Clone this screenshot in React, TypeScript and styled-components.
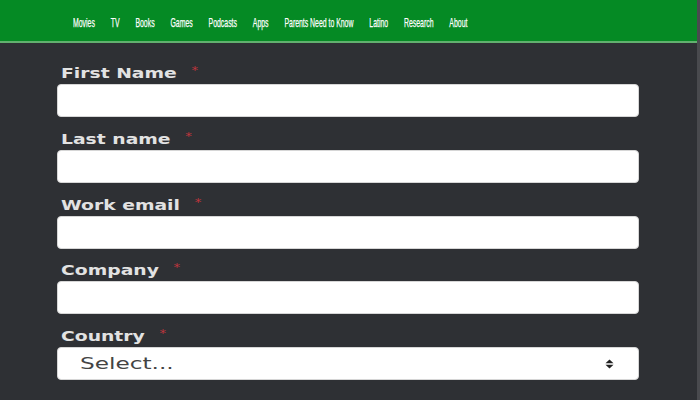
import React from "react";
import styled, { createGlobalStyle } from "styled-components";

const GlobalStyle = createGlobalStyle`
  html, body { margin: 0; padding: 0; }
  body { background: #2e3034; font-family: "DejaVu Sans", sans-serif; overflow: hidden; }
`;

const Page = styled.div`
  width: 700px;
  height: 400px;
  box-sizing: border-box;
  border-right: 3px solid rgba(255, 255, 255, 0.13);
  display: flex;
  flex-direction: column;
  overflow: hidden;
`;

const Header = styled.header`
  height: 41px;
  flex-shrink: 0;
  background: #058a24;
  border-bottom: 2px solid #62b06f;
  display: flex;
  align-items: center;
  padding-left: 73px;
`;

const Nav = styled.nav`
  display: flex;
  gap: 30px;
  transform: scaleX(0.53);
  transform-origin: left center;
  white-space: nowrap;
  margin-top: 3px;
`;

const NavLink = styled.a`
  color: #ffffff;
  font-family: "Liberation Sans", Arial, sans-serif;
  font-size: 13px;
  text-decoration: none;
  -webkit-text-stroke: 0.25px #ffffff;
`;

const Form = styled.form`
  display: flex;
  flex-direction: column;
  gap: 11.75px;
  padding: 20px 58px 0 57px;
`;

const Field = styled.div`
  display: flex;
  flex-direction: column;
`;

const Label = styled.label`
  display: block;
  height: 17px;
  line-height: 15px;
  margin-bottom: 4px;
  padding-left: 4px;
`;

const LabelText = styled.span`
  display: inline-block;
  transform: scaleX(1.34);
  transform-origin: left center;
  color: #e2e2e2;
  font-family: "DejaVu Sans", sans-serif;
  font-weight: bold;
  font-size: 14px;
  white-space: nowrap;
`;

const Required = styled.span`
  color: #c0353d;
  font-size: 10px;
  font-weight: normal;
  vertical-align: 4px;
  margin-left: 11px;
`;

const Input = styled.input`
  box-sizing: border-box;
  width: 100%;
  height: 33px;
  border: 1px solid #d6d6d6;
  border-radius: 4px;
  background: #ffffff;
  outline: none;
`;

const SelectBox = styled.div`
  box-sizing: border-box;
  height: 33px;
  border: 1px solid #d6d6d6;
  border-radius: 4px;
  background: #ffffff;
  display: flex;
  align-items: center;
  justify-content: space-between;
  padding: 0 24px 0 22px;
`;

const SelectText = styled.span`
  display: inline-block;
  transform: scaleX(1.45);
  transform-origin: left center;
  color: #444444;
  font-family: "DejaVu Sans", sans-serif;
  font-size: 16px;
  white-space: nowrap;
`;

const SortIcon = () => (
  <svg width="9" height="10" viewBox="0 0 9 10" aria-hidden="true">
    <path d="M4.5 0.5 L8.5 4.2 H0.5 Z" fill="#222" />
    <path d="M4.5 9.5 L8.5 5.8 H0.5 Z" fill="#222" />
  </svg>
);

const navItems = [
  "Movies",
  "TV",
  "Books",
  "Games",
  "Podcasts",
  "Apps",
  "Parents Need to Know",
  "Latino",
  "Research",
  "About",
];

const fields = ["First Name", "Last name", "Work email", "Company"];

export default function App() {
  return (
    <>
      <GlobalStyle />
      <Page>
        <Header>
          <Nav>
            {navItems.map((n) => (
              <NavLink key={n} href="#">
                {n}
              </NavLink>
            ))}
          </Nav>
        </Header>
        <Form onSubmit={(e) => e.preventDefault()}>
          {fields.map((f) => (
            <Field key={f}>
              <Label>
                <LabelText>
                  {f}
                  <Required>*</Required>
                </LabelText>
              </Label>
              <Input type="text" />
            </Field>
          ))}
          <Field>
            <Label>
              <LabelText>
                Country
                <Required>*</Required>
              </LabelText>
            </Label>
            <SelectBox>
              <SelectText>Select...</SelectText>
              <SortIcon />
            </SelectBox>
          </Field>
        </Form>
      </Page>
    </>
  );
}
